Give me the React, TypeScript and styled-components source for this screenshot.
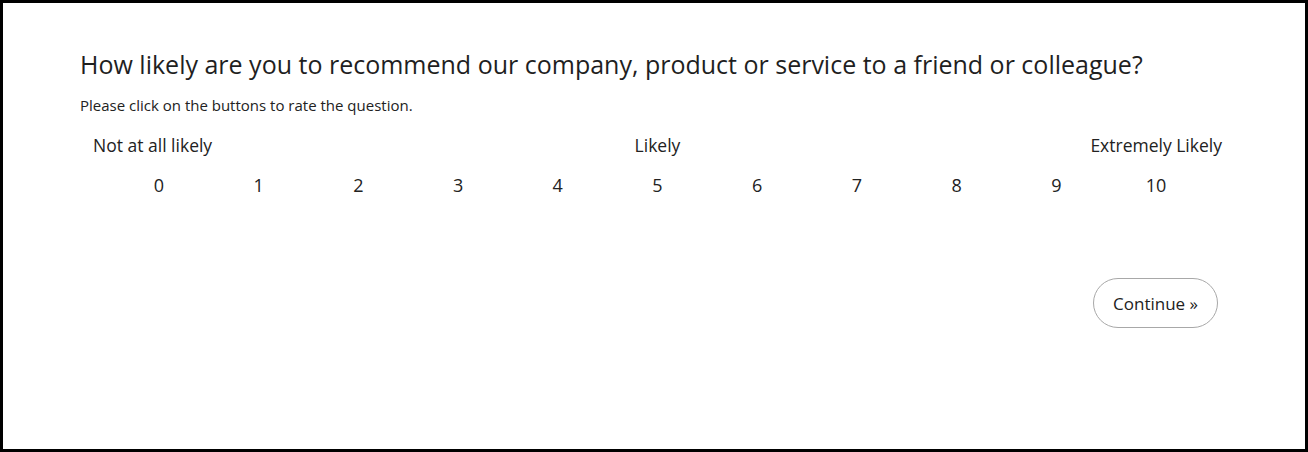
import React from "react";
import styled, { createGlobalStyle } from "styled-components";

const GlobalStyle = createGlobalStyle`
  html, body {
    margin: 0;
    padding: 0;
    background: #ffffff;
  }
  body {
    font-family: "Open Sans", "Liberation Sans", sans-serif;
    color: #222222;
  }
`;

const Frame = styled.div`
  width: 1308px;
  height: 452px;
  box-sizing: border-box;
  border: 3px solid #000000;
  background: #ffffff;
  padding: 43px 0 0 77px;
`;

const Survey = styled.div`
  width: 1155px;
`;

const Question = styled.h1`
  margin: 0;
  font-size: 25px;
  font-weight: 400;
  line-height: 36px;
  color: #1f1f1f;
`;

const Hint = styled.p`
  margin: 13px 0 0;
  font-size: 15px;
  line-height: 20px;
  color: #222222;
`;

const Labels = styled.div`
  display: grid;
  grid-template-columns: 1fr auto 1fr;
  margin: 19px 13px 0;
  font-size: 17.5px;
  line-height: 22px;
`;

const Label = styled.span<{ $align: "left" | "center" | "right" }>`
  text-align: ${(p) => p.$align};
`;

const Scale = styled.div`
  display: grid;
  grid-template-columns: repeat(11, 1fr);
  margin: 17px 29px 0;
`;

const Score = styled.button`
  border: none;
  background: transparent;
  font-family: inherit;
  font-size: 18px;
  line-height: 24px;
  color: #222222;
  text-align: center;
  padding: 0;
  cursor: pointer;
`;

const Footer = styled.div`
  display: flex;
  justify-content: flex-end;
  margin: 81px 17px 0 0;
`;

const ContinueButton = styled.button`
  height: 50px;
  width: 125px;
  padding: 0;
  border: 1px solid #a8a8a8;
  border-radius: 25px;
  background: #ffffff;
  font-family: inherit;
  font-size: 17px;
  color: #222222;
  cursor: pointer;
`;

const App: React.FC = () => {
  const scores = Array.from({ length: 11 }, (_, i) => i);

  return (
    <>
      <GlobalStyle />
      <Frame>
        <Survey>
          <Question>
            How likely are you to recommend our company, product or service to
            a friend or colleague?
          </Question>
          <Hint>Please click on the buttons to rate the question.</Hint>
          <Labels>
            <Label $align="left">Not at all likely</Label>
            <Label $align="center">Likely</Label>
            <Label $align="right">Extremely Likely</Label>
          </Labels>
          <Scale>
            {scores.map((n) => (
              <Score key={n}>{n}</Score>
            ))}
          </Scale>
          <Footer>
            <ContinueButton>Continue »</ContinueButton>
          </Footer>
        </Survey>
      </Frame>
    </>
  );
};

export default App;
